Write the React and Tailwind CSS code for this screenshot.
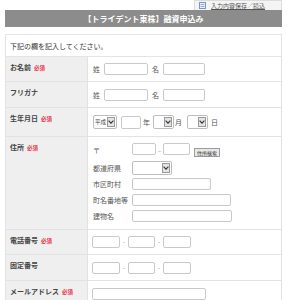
import React from "react";

function Req() {
  return <span className="ml-[3px] text-[5.5px] font-bold text-[#e8334a] align-middle">必須</span>;
}

function Box({ className = "" }) {
  return <div className={"shrink-0 bg-white border border-[#c9c9c9] rounded-[2px] " + className} />;
}

function Sel({ className = "", text = "" }) {
  return (
    <div className={"shrink-0 flex items-center justify-between bg-white border border-[#bdbdbd] rounded-[2px] pl-[1px] pr-[1px] " + className}>
      <span className="text-[5.5px] leading-[8px] text-[#444] whitespace-nowrap">{text}</span>
      <div className="w-[8px] h-[10px] shrink-0 bg-[#e4e4e4] border border-[#9a9a9a] flex items-center justify-center">
        <svg width="6" height="4" viewBox="0 0 6 4">
          <path d="M0.6 0.6 L3 3.2 L5.4 0.6" fill="none" stroke="#333" strokeWidth="1.1" />
        </svg>
      </div>
    </div>
  );
}

function Row({ label, req, h, children, right = "" }) {
  return (
    <div className={"flex border-b border-[#e2e2e2] " + h}>
      <div className="w-[82px] shrink-0 bg-[#efefef] border-r border-[#e2e2e2] pl-[4px] pt-[6px] text-[7px] leading-[8px] font-bold text-[#444] whitespace-nowrap">
        {label}
        {req && <Req />}
      </div>
      <div className={"flex-1 min-w-0 " + right}>{children}</div>
    </div>
  );
}

const L = "shrink-0 text-[7px] leading-[8px] text-[#555]";

export default function App() {
  return (
    <div className="w-[287px] h-[300px] overflow-hidden bg-white font-['Noto_Sans_CJK_JP','Noto_Sans',sans-serif]">
      <div className="ml-[5px] w-[277px]">
        <div className="flex justify-end">
          <div className="w-[88px] h-[10px] bg-[#f4f4f4] border-t border-l border-r border-[#dcdcdc] flex items-center pl-[4px] gap-[5px]">
            <svg width="7" height="7" viewBox="0 0 7 7">
              <rect x="0.5" y="0.5" width="6" height="6" fill="#eef3fb" stroke="#7a95c4" strokeWidth="1" />
              <line x1="1.5" y1="2.5" x2="5.5" y2="2.5" stroke="#7a95c4" strokeWidth="0.8" />
              <line x1="1.5" y1="4.5" x2="5.5" y2="4.5" stroke="#7a95c4" strokeWidth="0.8" />
            </svg>
            <span className="text-[6px] leading-[7px] text-[#555] underline whitespace-nowrap">入力内容保存／読込</span>
          </div>
        </div>
        <div className="h-[17px] bg-[#8c8c8c] flex items-center justify-center">
          <span className="text-[8px] leading-[9px] font-bold text-white whitespace-nowrap">【トライデント東株】融資申込み</span>
        </div>
        <div className="mt-[7px] h-[23px] border border-[#e4e4e4] flex items-center pl-[4px]">
          <span className="text-[7px] leading-[8px] text-[#333]">下記の欄を記入してください。</span>
        </div>
        <div className="border-l border-r border-[#e2e2e2]">
          <Row label="お名前" req h="h-[25px]" right="flex items-center pl-[5px]">
            <span className={L + " w-[11px]"}>姓</span>
            <Box className="w-[44px] h-[12px]" />
            <span className={L + " w-[11px] ml-[4px]"}>名</span>
            <Box className="w-[42px] h-[12px]" />
          </Row>
          <Row label="フリガナ" h="h-[26px]" right="flex items-center pl-[5px] pt-[1px]">
            <span className={L + " w-[11px]"}>姓</span>
            <Box className="w-[44px] h-[12px]" />
            <span className={L + " w-[11px] ml-[4px]"}>名</span>
            <Box className="w-[42px] h-[12px]" />
          </Row>
          <Row label="生年月日" req h="h-[29px]" right="flex items-center pl-[5px]">
            <Sel className="w-[24px] h-[14px]" text="平成" />
            <Box className="w-[20px] h-[13px] ml-[4px]" />
            <span className={L + " w-[10px] ml-[2px]"}>年</span>
            <Sel className="w-[21px] h-[14px]" />
            <span className={L + " w-[13px] pl-[1px]"}>月</span>
            <Sel className="w-[21px] h-[14px]" />
            <span className={L + " ml-[3px]"}>日</span>
          </Row>
          <Row label="住所" req h="h-[93px]" right="flex flex-col pl-[5px] pt-[6px]">
            <div className="flex items-start h-[12px]">
              <span className={L + " w-[39px] mt-[3px]"}>〒</span>
              <Box className="w-[24px] h-[12px]" />
              <span className="w-[7px] shrink-0 text-center text-[6px] leading-[8px] text-[#888] mt-[4px]">–</span>
              <Box className="w-[27px] h-[12px]" />
              <div className="ml-[4px] mt-[5px] w-[26px] h-[9px] shrink-0 bg-[#e9e9e9] border border-[#9c9c9c] flex items-center justify-center">
                <span className="text-[5px] leading-[6px] text-[#333] whitespace-nowrap">住所検索</span>
              </div>
            </div>
            <div className="flex items-center mt-[6px] h-[14px]">
              <span className={L + " w-[39px]"}>都道府県</span>
              <Sel className="w-[40px] h-[14px]" />
            </div>
            <div className="flex items-center mt-[3px] h-[12px]">
              <span className={L + " w-[39px]"}>市区町村</span>
              <Box className="w-[79px] h-[12px]" />
            </div>
            <div className="flex items-center mt-[4px] h-[12px]">
              <span className={L + " w-[39px] whitespace-nowrap"}>町名番地等</span>
              <Box className="w-[99px] h-[12px]" />
            </div>
            <div className="flex items-center mt-[4px] h-[12px]">
              <span className={L + " w-[39px]"}>建物名</span>
              <Box className="w-[100px] h-[12px]" />
            </div>
          </Row>
          <Row label="電話番号" req h="h-[25px]" right="flex items-center pl-[4px]">
            <Box className="w-[28px] h-[12px]" />
            <span className="w-[8px] shrink-0 text-center text-[6px] leading-[8px] text-[#888]">-</span>
            <Box className="w-[27px] h-[12px]" />
            <span className="w-[8px] shrink-0 text-center text-[6px] leading-[8px] text-[#888]">-</span>
            <Box className="w-[28px] h-[12px]" />
          </Row>
          <Row label="固定番号" h="h-[26px]" right="flex items-center pl-[4px]">
            <Box className="w-[28px] h-[12px]" />
            <span className="w-[8px] shrink-0 text-center text-[6px] leading-[8px] text-[#888]">-</span>
            <Box className="w-[27px] h-[12px]" />
            <span className="w-[8px] shrink-0 text-center text-[6px] leading-[8px] text-[#888]">-</span>
            <Box className="w-[28px] h-[12px]" />
          </Row>
          <Row label="メールアドレス" req h="h-[26px]" right="flex items-center pl-[4px]">
            <Box className="w-[114px] h-[12px]" />
          </Row>
        </div>
      </div>
    </div>
  );
}
